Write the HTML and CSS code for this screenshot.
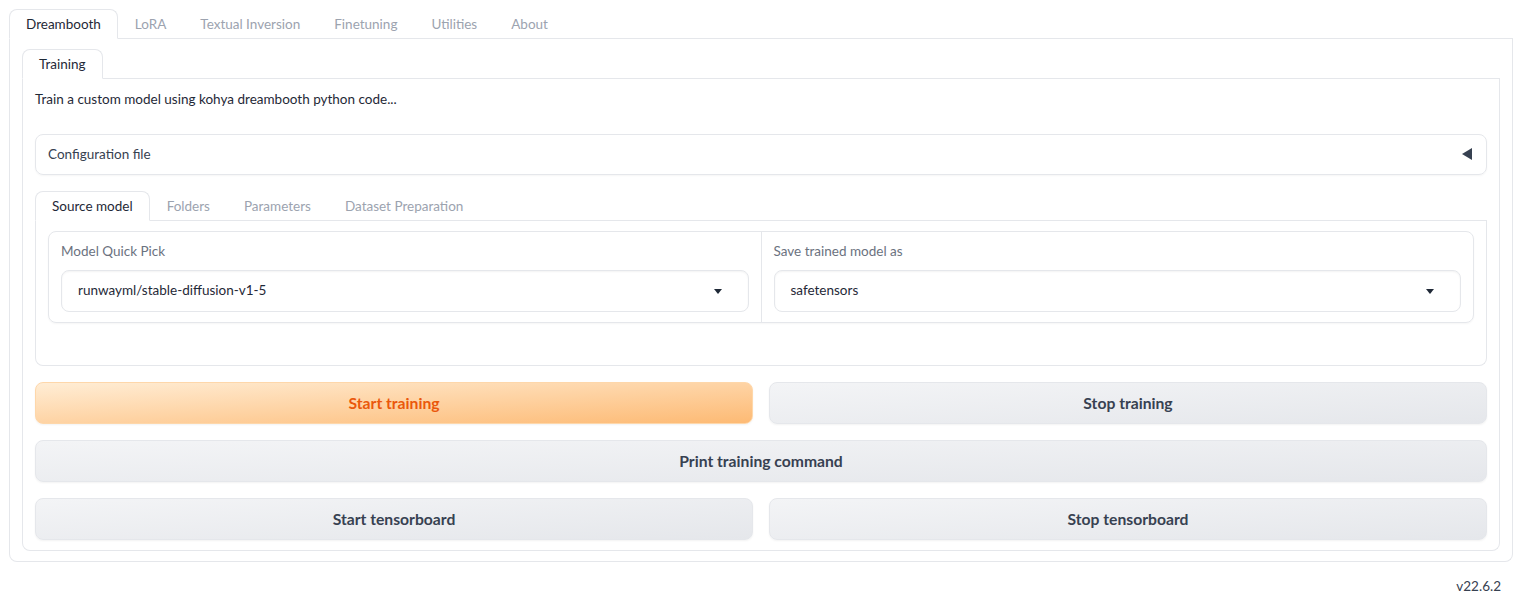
FILE: index.html
```html
<!DOCTYPE html>
<html>
<head>
<meta charset="utf-8">
<link rel="stylesheet" href="styles.css">
</head>
<body>
<div class="app">
  <div class="tabs-nav">
    <button class="tab selected">Dreambooth</button>
    <button class="tab">LoRA</button>
    <button class="tab">Textual Inversion</button>
    <button class="tab">Finetuning</button>
    <button class="tab">Utilities</button>
    <button class="tab">About</button>
  </div>
  <div class="outer-panel">
    <div class="tabs-nav">
      <button class="tab selected">Training</button>
    </div>
    <div class="inner-panel">
      <p class="desc">Train a custom model using kohya dreambooth python code...</p>
      <div class="accordion">
        <span>Configuration file</span>
        <svg class="acc-icon" width="10" height="12" viewBox="0 0 10 12"><polygon points="10,0 10,12 0,6" fill="#374151"/></svg>
      </div>
      <div class="subtabs">
        <div class="tabs-nav">
          <button class="tab selected">Source model</button>
          <button class="tab">Folders</button>
          <button class="tab">Parameters</button>
          <button class="tab">Dataset Preparation</button>
        </div>
        <div class="subpanel">
          <div class="block-row">
            <div class="field">
              <div class="label">Model Quick Pick</div>
              <div class="dropdown">
                <span>runwayml/stable-diffusion-v1-5</span>
                <svg width="8" height="5" viewBox="0 0 8 5"><polygon points="0,0 8,0 4,5" fill="#1f2937"/></svg>
              </div>
            </div>
            <div class="field">
              <div class="label">Save trained model as</div>
              <div class="dropdown">
                <span>safetensors</span>
                <svg width="8" height="5" viewBox="0 0 8 5"><polygon points="0,0 8,0 4,5" fill="#1f2937"/></svg>
              </div>
            </div>
          </div>
        </div>
      </div>
      <div class="btn-row">
        <button class="btn primary">Start training</button>
        <button class="btn">Stop training</button>
      </div>
      <div class="btn-row">
        <button class="btn">Print training command</button>
      </div>
      <div class="btn-row">
        <button class="btn">Start tensorboard</button>
        <button class="btn">Stop tensorboard</button>
      </div>
    </div>
  </div>
  <div class="version">v22.6.2</div>
</div>
</body>
</html>
```
FILE: styles.css
```css
* { box-sizing: border-box; }
html, body { margin: 0; padding: 0; background: #fff; }
body {
  font-family: Lato, "Liberation Sans", sans-serif;
  font-size: 13.5px;
  color: #1f2937;
}
.app {
  margin: 9px 16px 0 9px;
}
.tabs-nav {
  display: flex;
  border-bottom: 1px solid #e5e7eb;
  height: 30px;
}
.tab {
  font-family: inherit;
  font-size: 13.5px;
  height: 30px;
  margin-bottom: -1px;
  padding: 0 16px 1px 16px;
  border: 1px solid transparent;
  border-radius: 8px 8px 0 0;
  background: transparent;
  color: #9ca3af;
  cursor: pointer;
}
.tab.selected {
  border-color: #e5e7eb;
  border-bottom-color: #fff;
  background: #fff;
  color: #1f2937;
}
.outer-panel {
  border: 1px solid #e5e7eb;
  border-top: none;
  border-radius: 0 0 8px 8px;
  padding: 10px 12px 10px 12px;
}
.inner-panel {
  border: 1px solid #e5e7eb;
  border-top: none;
  border-radius: 0 0 8px 8px;
  padding: 10px 12px 10px 12px;
  display: flex;
  flex-direction: column;
}
.desc {
  margin: 0;
  line-height: 21px;
  color: #1f2937;
}
.accordion {
  margin-top: 24px;
  height: 41px;
  border: 1px solid #e5e7eb;
  border-radius: 8px;
  box-shadow: 0 1px 2px rgba(0,0,0,0.04);
  display: flex;
  align-items: center;
  justify-content: space-between;
  padding: 0 14px 1px 12px;
  color: #374151;
}
.acc-icon { display: block; }
.subtabs { margin-top: 16px; }
.subpanel {
  border: 1px solid #e5e7eb;
  border-top: none;
  padding: 10px 12px 42px 12px;
  border-radius: 0 0 8px 8px;
}
.block-row {
  display: flex;
  border: 1px solid #e5e7eb;
  border-radius: 8px;
  box-shadow: 0 1px 2px rgba(0,0,0,0.04);
}
.field {
  flex: 1;
  padding: 9px 12px 10px 12px;
}
.field + .field { border-left: 1px solid #e5e7eb; }
.label {
  color: #6b7280;
  line-height: 20px;
  margin-bottom: 9px;
}
.dropdown {
  height: 42px;
  border: 1px solid #e5e7eb;
  border-radius: 8px;
  box-shadow: 0 1px 2px rgba(0,0,0,0.05) inset;
  display: flex;
  align-items: center;
  justify-content: space-between;
  padding: 0 26px 2px 16px;
  color: #1f2937;
}
.dropdown svg { display: block; margin-top: 2px; }
.btn-row {
  display: flex;
  gap: 16px;
  margin-top: 16px;
}
.btn-row:first-of-type { margin-top: 17px; }
.btn {
  flex: 1;
  height: 42px;
  font-family: inherit;
  font-size: 15.7px;
  font-weight: 700;
  color: #374151;
  border: 1px solid #e5e7eb;
  border-radius: 8px;
  background: linear-gradient(to bottom right, #f3f4f6, #e5e7eb);
  box-shadow: 0 1px 2px rgba(0,0,0,0.05);
  padding-bottom: 2px;
  cursor: pointer;
}
.btn.primary {
  color: #ea580c;
  border-color: #fed7aa;
  background: linear-gradient(to bottom right, #ffedd5, #fdba74);
}
.version {
  text-align: right;
  margin-top: 16px;
  padding-right: 12px;
  color: #374151;
  font-size: 13.5px;
}
```
